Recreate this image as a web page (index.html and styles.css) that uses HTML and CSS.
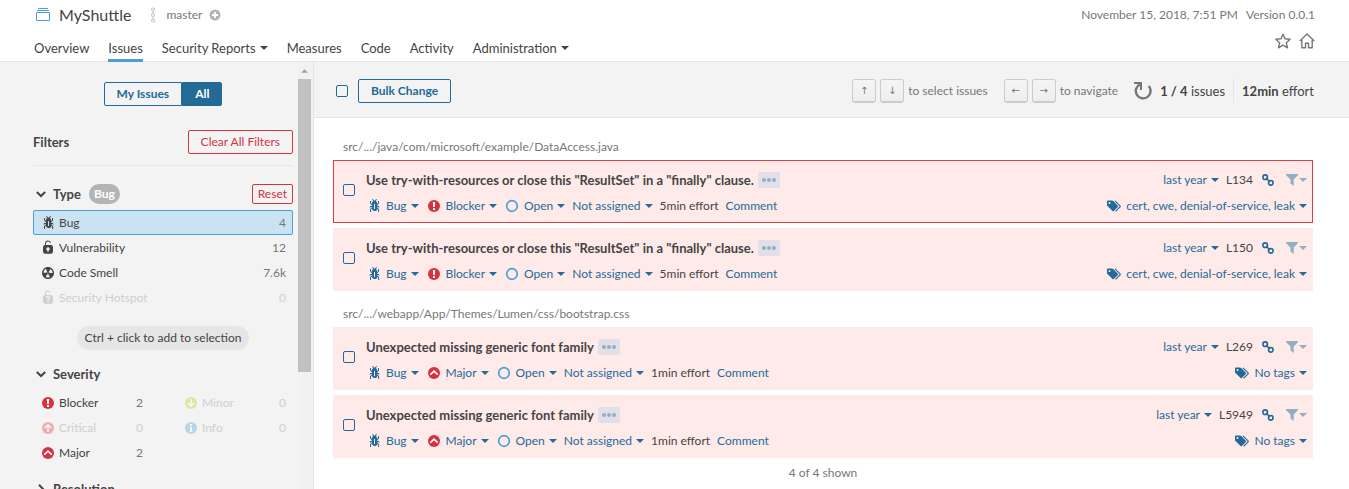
FILE: index.html
```html
<!DOCTYPE html>
<html lang="en">
<head>
<meta charset="utf-8">
<title>MyShuttle - Issues</title>
<link rel="stylesheet" href="styles.css">
</head>
<body>
<svg class="sprite" aria-hidden="true">
  <symbol id="bug" viewBox="0 0 16 16"><path fill="currentColor" d="M11 9h1.3l.5.8.8-.5-.8-1.3H11v-.3l2-2.3V3h-1v2l-1 1.2V5c-.1-.8-.7-1.5-1.4-1.9L11 1.800l-.7-.7-1.800 1.600-1.800-1.600-.7.7 1.500 1.300C6.700 3.500 6.100 4.200 6 5v1.100L5 5V3H4v2.300l2 2.300V8H4.200l-.7 1.200.8.5.4-.7H6v.3l-2 1.900V14h1v-2.400l1-1C6 12 7.100 13 8.400 13h.8c.7 0 1.400-.3 1.800-.9.3-.4.3-.9.2-1.400l.9.9V14h1v-2.800l-2-1.900V9zm-2 2H8V6h1v5z"/></symbol>
  <symbol id="lock" viewBox="0 0 16 16"><path fill="currentColor" d="M10.8 5H6V3.9a2.28 2.28 0 0 1 2-2.5 2.22 2.22 0 0 1 1.8 1.2.48.48 0 0 0 .7.2.48.48 0 0 0 .2-.7A3 3 0 0 0 8 .4a3.34 3.34 0 0 0-3 3.5v1.2a2.16 2.16 0 0 0-2 2.1v4.4a2.22 2.22 0 0 0 2.2 2.2h5.6a2.22 2.22 0 0 0 2.2-2.2V7.2A2.22 2.22 0 0 0 10.8 5zm-2.2 5.5v1.2H7.4v-1.2a1.66 1.66 0 0 1-1.1-1.6A1.75 1.75 0 0 1 8 7.2a1.71 1.71 0 0 1 .6 3.3z"/></symbol>
  <symbol id="hotspot" viewBox="0 0 16 16"><path fill="currentColor" d="M10.8 5H6V3.9a2.28 2.28 0 0 1 2-2.5 2.22 2.22 0 0 1 1.8 1.2.48.48 0 0 0 .7.2.48.48 0 0 0 .2-.7A3 3 0 0 0 8 .4a3.34 3.34 0 0 0-3 3.5v1.2a2.16 2.16 0 0 0-2 2.1v4.4a2.22 2.22 0 0 0 2.2 2.2h5.6a2.22 2.22 0 0 0 2.2-2.2V7.2A2.22 2.22 0 0 0 10.8 5z"/><path fill="none" stroke="#f3f3f3" stroke-width="1.3" d="M6.2 8q.2-1.600 1.800-1.600t1.800 1.400Q9.800 8.800 8 9.700v.8M8 11.300v1.300"/></symbol>
  <symbol id="smell" viewBox="0 0 16 16"><path fill="currentColor" d="M8 2C4.7 2 2 4.7 2 8s2.700 6 6 6 6-2.700 6-6-2.700-6-6-6zm-.5 5.500h.9v.9h-.9v-.9zm-3.800.2c-.1 0-.2-.1-.2-.2 0-.4.1-1.200.6-2S5.300 4.200 5.600 4c.2 0 .3 0 .3.1l1.300 2.300c0 .1 0 .2-.1.2-.1.2-.2.3-.3.5-.1.2-.2.4-.2.5 0 .1-.1.2-.2.2l-2.700-.1zM9.900 12c-.3.2-1.100.5-2 .5-.9 0-1.700-.3-2-.5-.1 0-.1-.2-.1-.3l1.300-2.300c0-.1.1-.1.2-.1.2.1.3.1.5.1s.4 0 .5-.1c.1 0 .2 0 .2.1l1.300 2.300c.2.2.2.3.1.3zm2.500-4.100L9.700 8c-.1 0-.2-.1-.2-.2 0-.2-.1-.4-.2-.5 0-.1-.2-.3-.3-.4-.1 0-.1-.1-.1-.2l1.300-2.300c.1-.1.2-.1.3-.1.3.2 1 .7 1.500 1.500s.6 1.600.6 2c0 0-.1.1-.2.1z"/></symbol>
  <symbol id="blocker" viewBox="0 0 16 16"><circle cx="8" cy="8" r="6" fill="#d4333f"/><path fill="#fff" d="M6.900 4h2.200L8.900 9H7.100zM7 10h2v2H7z"/></symbol>
  <symbol id="critical" viewBox="0 0 16 16"><circle cx="8" cy="8" r="6" fill="#d4333f"/><path fill="none" stroke="#fff" stroke-width="1.600" d="M8 12V5M4.800 8 8 4.800 11.200 8"/></symbol>
  <symbol id="major" viewBox="0 0 16 16"><circle cx="8" cy="8" r="6" fill="#d4333f"/><path fill="none" stroke="#fff" stroke-width="1.700" d="M4.300 9.600 8 6.200l3.700 3.400"/></symbol>
  <symbol id="minor" viewBox="0 0 16 16"><circle cx="8" cy="8" r="6" fill="#b0d513"/><path fill="none" stroke="#fff" stroke-width="1.600" d="M8 4v7M4.800 8 8 11.200 11.200 8"/></symbol>
  <symbol id="info" viewBox="0 0 16 16"><circle cx="8" cy="8" r="6" fill="#4b9fd5"/><path fill="#fff" d="M7 4h2v1.700H7zM6.500 6.700H9V11h.6v1h-3v-1H7V7.700h-.5z"/></symbol>
  <symbol id="open" viewBox="0 0 16 16"><circle cx="8" cy="8" r="5.300" fill="none" stroke="#4b9fd5" stroke-width="1.700"/></symbol>
  <symbol id="caret" viewBox="0 0 8 4"><path fill="currentColor" d="M0 0h8L4 4z"/></symbol>
  <symbol id="chevron" viewBox="0 0 10 10"><path fill="none" stroke="currentColor" stroke-width="2" d="m.8 3 4.200 4 4.200-4"/></symbol>
  <symbol id="link" viewBox="0 0 12 12"><g fill="none" stroke="currentColor" stroke-width="1.600"><circle cx="3.200" cy="3.200" r="2.300"/><circle cx="8.800" cy="8.800" r="2.300"/><path d="m4 4 4 4"/></g></symbol>
  <symbol id="funnel" viewBox="0 0 12 12"><path fill="currentColor" d="M0 0h12v1L7.700 5.500V12L4.500 9.500v-4L0 1z"/></symbol>
  <symbol id="tags" viewBox="0 0 14 12"><path fill="currentColor" fill-rule="evenodd" d="M0 1.200Q0 .5.800.5h4.100q.8 0 1.400.6l4.500 4.600q.6.700 0 1.300l-3.900 4q-.6.500-1.300 0L.7 6.300Q0 5.700 0 4.900zM2.500 2a1 1 0 1 0 0 2 1 1 0 0 0 0-2z"/><path fill="none" stroke="currentColor" stroke-width="1.200" d="m8 .8 5 5q.5.600 0 1.100L8.600 11.300"/></symbol>
</svg>

<header class="header">
  <div class="header-top">
    <div class="project">
      <svg class="project-icon" viewBox="0 0 16 16" fill="none" stroke="#4b9fd5"><path d="M1.500 5.500h13v8h-13zM2 3.500h12M3 1.500h10"/></svg>
      <span class="project-name">MyShuttle</span>
      <svg class="branch-icon" viewBox="0 0 6 16" fill="none" stroke="#c9c9c9" stroke-width="1.200"><circle cx="3" cy="2.500" r="1.500"/><circle cx="3" cy="8" r="1.500"/><circle cx="3" cy="13.500" r="1.500"/><path d="M3 4v2.500M3 9.500V12"/></svg>
      <span class="branch">master</span>
      <svg class="plus-icon" viewBox="0 0 12 12"><circle cx="6" cy="6" r="5.500" fill="#b4b4b4"/><path d="M6 3v6M3 6h6" stroke="#fff" stroke-width="1.800"/></svg>
    </div>
    <div class="version"><span>November 15, 2018, 7:51 PM</span><span>Version 0.0.1</span></div>
  </div>
  <div class="header-nav">
    <nav class="nav">
      <a href="#">Overview</a>
      <a href="#" class="active">Issues</a>
      <a href="#">Security Reports<svg class="caret"><use href="#caret"/></svg></a>
      <a href="#">Measures</a>
      <a href="#">Code</a>
      <a href="#">Activity</a>
      <a href="#">Administration<svg class="caret"><use href="#caret"/></svg></a>
    </nav>
    <div class="header-actions">
      <button aria-label="Favorite"><svg viewBox="0 0 16 16"><path fill="none" stroke="#777" stroke-width="1.400" stroke-linejoin="round" d="m8 1.200 2 4.600 5.200.5-3.900 3.400 1.200 5.100L8 12.200l-4.500 2.600 1.200-5.100L.8 6.300 6 5.800z"/></svg></button>
      <a href="#" aria-label="Home"><svg viewBox="0 0 16 16"><path fill="none" stroke="#777" stroke-width="1.400" stroke-linejoin="round" d="M.8 8 8 1l7.200 7M2.800 7v7.800h3.700v-4.500h3v4.500h3.700V7"/></svg></a>
    </div>
  </div>
</header>

<div class="layout">
  <aside class="sidebar">
    <div class="sidebar-content">
      <div class="toggle"><button>My Issues</button><button class="selected">All</button></div>
      <div class="filters-head"><h2>Filters</h2><button class="btn-red">Clear All Filters</button></div>

      <section class="facet">
        <div class="facet-head"><svg class="chevron"><use href="#chevron"/></svg><h3>Type</h3><span class="badge">Bug</span><button class="btn-red btn-small">Reset</button></div>
        <div class="facet-list">
          <button class="facet-item chosen"><svg><use href="#bug"/></svg><span>Bug</span><span class="count">4</span></button>
          <button class="facet-item"><svg><use href="#lock"/></svg><span>Vulnerability</span><span class="count">12</span></button>
          <button class="facet-item"><svg><use href="#smell"/></svg><span>Code Smell</span><span class="count">7.6k</span></button>
          <button class="facet-item disabled" disabled><svg><use href="#hotspot"/></svg><span>Security Hotspot</span><span class="count">0</span></button>
        </div>
        <div class="hint">Ctrl + click to add to selection</div>
      </section>

      <section class="facet">
        <div class="facet-head"><svg class="chevron"><use href="#chevron"/></svg><h3>Severity</h3></div>
        <div class="facet-list two-columns">
          <button class="facet-item"><svg><use href="#blocker"/></svg><span>Blocker</span><span class="count">2</span></button>
          <button class="facet-item disabled" disabled><svg><use href="#minor"/></svg><span>Minor</span><span class="count">0</span></button>
          <button class="facet-item disabled" disabled><svg><use href="#critical"/></svg><span>Critical</span><span class="count">0</span></button>
          <button class="facet-item disabled" disabled><svg><use href="#info"/></svg><span>Info</span><span class="count">0</span></button>
          <button class="facet-item"><svg><use href="#major"/></svg><span>Major</span><span class="count">2</span></button>
        </div>
      </section>

      <section class="facet">
        <div class="facet-head"><svg class="chevron closed"><use href="#chevron"/></svg><h3>Resolution</h3></div>
      </section>
    </div>
    <div class="scrollbar"><svg class="scroll-up"><use href="#caret"/></svg><div class="thumb"></div></div>
  </aside>

  <main class="main">
    <div class="toolbar">
      <input type="checkbox" aria-label="Select all issues">
      <button class="btn-blue">Bulk Change</button>
      <div class="shortcuts">
        <span class="keys"><kbd>↑</kbd><kbd>↓</kbd>to select issues</span>
        <span class="keys"><kbd>←</kbd><kbd>→</kbd>to navigate</span>
      </div>
      <button class="reload" aria-label="Reload"><svg viewBox="0 0 18 18" fill="none" stroke="#777"><path stroke-width="2.400" d="M6 2.300A7.400 7.400 0 1 0 14.700 4"/><path stroke-width="2" d="M0 1h7v7"/></svg></button>
      <span class="counter"><b>1 / 4</b> issues</span>
      <span class="effort"><b>12min</b> effort</span>
    </div>

    <div class="issues">
      <div class="path">src/.../java/com/microsoft/example/DataAccess.java</div>
      <article class="issue current">
        <input type="checkbox" aria-label="Select issue">
        <div class="issue-body">
          <div class="row">
            <h4>Use try-with-resources or close this "ResultSet" in a "finally" clause.</h4><button class="more" aria-label="Show rule"><i></i><i></i><i></i></button>
            <div class="row-end"><button>last year<svg class="caret"><use href="#caret"/></svg></button><span class="line">L134</span><a href="#" aria-label="Permalink"><svg class="link"><use href="#link"/></svg></a><button class="similar" aria-label="Filter similar issues"><svg class="funnel"><use href="#funnel"/></svg><svg class="caret"><use href="#caret"/></svg></button></div>
          </div>
          <div class="row meta">
            <button><svg class="icon"><use href="#bug"/></svg>Bug<svg class="caret"><use href="#caret"/></svg></button>
            <button><svg class="icon"><use href="#blocker"/></svg>Blocker<svg class="caret"><use href="#caret"/></svg></button>
            <button><svg class="icon"><use href="#open"/></svg>Open<svg class="caret"><use href="#caret"/></svg></button>
            <button>Not assigned<svg class="caret"><use href="#caret"/></svg></button>
            <span>5min effort</span>
            <button>Comment</button>
            <div class="row-end"><button><svg class="tags"><use href="#tags"/></svg>cert, cwe, denial-of-service, leak<svg class="caret"><use href="#caret"/></svg></button></div>
          </div>
        </div>
      </article>
      <article class="issue">
        <input type="checkbox" aria-label="Select issue">
        <div class="issue-body">
          <div class="row">
            <h4>Use try-with-resources or close this "ResultSet" in a "finally" clause.</h4><button class="more" aria-label="Show rule"><i></i><i></i><i></i></button>
            <div class="row-end"><button>last year<svg class="caret"><use href="#caret"/></svg></button><span class="line">L150</span><a href="#" aria-label="Permalink"><svg class="link"><use href="#link"/></svg></a><button class="similar" aria-label="Filter similar issues"><svg class="funnel"><use href="#funnel"/></svg><svg class="caret"><use href="#caret"/></svg></button></div>
          </div>
          <div class="row meta">
            <button><svg class="icon"><use href="#bug"/></svg>Bug<svg class="caret"><use href="#caret"/></svg></button>
            <button><svg class="icon"><use href="#blocker"/></svg>Blocker<svg class="caret"><use href="#caret"/></svg></button>
            <button><svg class="icon"><use href="#open"/></svg>Open<svg class="caret"><use href="#caret"/></svg></button>
            <button>Not assigned<svg class="caret"><use href="#caret"/></svg></button>
            <span>5min effort</span>
            <button>Comment</button>
            <div class="row-end"><button><svg class="tags"><use href="#tags"/></svg>cert, cwe, denial-of-service, leak<svg class="caret"><use href="#caret"/></svg></button></div>
          </div>
        </div>
      </article>

      <div class="path">src/.../webapp/App/Themes/Lumen/css/bootstrap.css</div>
      <article class="issue">
        <input type="checkbox" aria-label="Select issue">
        <div class="issue-body">
          <div class="row">
            <h4>Unexpected missing generic font family</h4><button class="more" aria-label="Show rule"><i></i><i></i><i></i></button>
            <div class="row-end"><button>last year<svg class="caret"><use href="#caret"/></svg></button><span class="line">L269</span><a href="#" aria-label="Permalink"><svg class="link"><use href="#link"/></svg></a><button class="similar" aria-label="Filter similar issues"><svg class="funnel"><use href="#funnel"/></svg><svg class="caret"><use href="#caret"/></svg></button></div>
          </div>
          <div class="row meta">
            <button><svg class="icon"><use href="#bug"/></svg>Bug<svg class="caret"><use href="#caret"/></svg></button>
            <button><svg class="icon"><use href="#major"/></svg>Major<svg class="caret"><use href="#caret"/></svg></button>
            <button><svg class="icon"><use href="#open"/></svg>Open<svg class="caret"><use href="#caret"/></svg></button>
            <button>Not assigned<svg class="caret"><use href="#caret"/></svg></button>
            <span>1min effort</span>
            <button>Comment</button>
            <div class="row-end"><button><svg class="tags"><use href="#tags"/></svg>No tags<svg class="caret"><use href="#caret"/></svg></button></div>
          </div>
        </div>
      </article>
      <article class="issue">
        <input type="checkbox" aria-label="Select issue">
        <div class="issue-body">
          <div class="row">
            <h4>Unexpected missing generic font family</h4><button class="more" aria-label="Show rule"><i></i><i></i><i></i></button>
            <div class="row-end"><button>last year<svg class="caret"><use href="#caret"/></svg></button><span class="line">L5949</span><a href="#" aria-label="Permalink"><svg class="link"><use href="#link"/></svg></a><button class="similar" aria-label="Filter similar issues"><svg class="funnel"><use href="#funnel"/></svg><svg class="caret"><use href="#caret"/></svg></button></div>
          </div>
          <div class="row meta">
            <button><svg class="icon"><use href="#bug"/></svg>Bug<svg class="caret"><use href="#caret"/></svg></button>
            <button><svg class="icon"><use href="#major"/></svg>Major<svg class="caret"><use href="#caret"/></svg></button>
            <button><svg class="icon"><use href="#open"/></svg>Open<svg class="caret"><use href="#caret"/></svg></button>
            <button>Not assigned<svg class="caret"><use href="#caret"/></svg></button>
            <span>1min effort</span>
            <button>Comment</button>
            <div class="row-end"><button><svg class="tags"><use href="#tags"/></svg>No tags<svg class="caret"><use href="#caret"/></svg></button></div>
          </div>
        </div>
      </article>
      <div class="shown">4 of 4 shown</div>
    </div>
  </main>
</div>
</body>
</html>
```

FILE: styles.css
```css
* { box-sizing: border-box; }
body {
  margin: 0;
  height: 100vh;
  overflow: hidden;
  display: flex;
  flex-direction: column;
  font: 12px/16px Lato, "Open Sans", sans-serif;
  color: #444;
  background: #fff;
}
button {
  display: inline-flex;
  align-items: center;
  padding: 0;
  border: 0;
  background: none;
  font: inherit;
  color: inherit;
  white-space: nowrap;
}
a { color: inherit; text-decoration: none; }
h2, h3, h4 { margin: 0; font-size: 13px; font-weight: 700; }
b { font-weight: 700; }
svg { flex: none; }
.sprite { display: none; }
.caret { width: 8px; height: 4px; margin-left: 4px; }
input[type="checkbox"] {
  appearance: none;
  flex: none;
  width: 12px;
  height: 12px;
  margin: 0;
  border: 1px solid #236a97;
  border-radius: 2px;
}

.header {
  flex: none;
  padding: 0 34px;
  border-bottom: 1px solid #e6e6e6;
}
.header-top, .header-nav, .project, .nav, .header-actions, .version {
  display: flex;
  align-items: center;
}
.header-top, .header-nav { justify-content: space-between; }
.header-top { height: 30px; }
.header-nav { height: 31px; }
.project-icon { width: 16px; height: 16px; margin: 0 8px 0 1px; }
.project-name { font-size: 16px; }
.branch-icon { width: 6px; height: 16px; margin: 0 10px 0 19px; }
.branch { color: #777; }
.plus-icon { width: 12px; height: 12px; margin-left: 7px; }
.version { gap: 8px; color: #777; }
.nav { gap: 19px; font-size: 13px; align-self: stretch; }
.nav a {
  display: flex;
  align-items: center;
  height: 32px;
  padding-top: 7px;
  border-bottom: 3px solid transparent;
}
.nav .active { border-color: #4b9fd5; }
.header-actions { gap: 8px; align-self: flex-start; padding-top: 3px; }
.header-actions svg { display: block; width: 16px; height: 16px; }

.layout { flex: 1; min-height: 0; display: flex; }
.sidebar {
  flex: none;
  display: flex;
  width: 314px;
  overflow: hidden;
  background: #f3f3f3;
  border-right: 1px solid #e6e6e6;
}
.sidebar-content { flex: 1; padding: 20px 5px 0 33px; }
.scrollbar { width: 15px; padding: 7px 2px 0 0; background: #f1f1f1; }
.scroll-up { display: block; width: 7px; height: 4px; margin: 0 auto 6px; color: #a3a3a3; transform: rotate(180deg); }
.thumb { height: 293px; background: #c1c1c1; }

.toggle { display: flex; justify-content: center; margin-bottom: 24px; }
.toggle button, .btn-blue {
  height: 24px;
  padding: 0 12px;
  border: 1px solid #236a97;
  border-radius: 2px;
  font-weight: 700;
  color: #236a97;
}
.toggle button:first-child { border-radius: 2px 0 0 2px; }
.toggle .selected { border-radius: 0 2px 2px 0; background: #236a97; color: #fff; }
.filters-head {
  display: flex;
  align-items: center;
  justify-content: space-between;
  padding-bottom: 11px;
  border-bottom: 1px solid #e6e6e6;
  margin-bottom: 18px;
}
.btn-red {
  height: 24px;
  padding: 0 12px;
  border: 1px solid #d4333f;
  border-radius: 2px;
  color: #d4333f;
}
.btn-small { height: 20px; padding: 0 5px; margin-left: auto; }

.facet { margin-bottom: 14px; }
.facet-head { display: flex; align-items: center; height: 20px; padding-left: 3px; margin-bottom: 6px; }
.chevron { width: 10px; height: 10px; margin-right: 7px; }
.chevron.closed { transform: rotate(-90deg); }
.badge {
  height: 20px;
  margin-left: 8px;
  padding: 2px 5px;
  border-radius: 10px;
  background: #b4b4b4;
  color: #fff;
  font-weight: 700;
}
.facet-list { display: grid; }
.two-columns { grid-template-columns: 1fr 1fr; column-gap: 26px; }
.facet-item {
  height: 25px;
  padding: 0 6px;
  border: 1px solid transparent;
  border-radius: 2px;
}
.facet-item svg { width: 16px; height: 16px; margin-right: 3px; }
.facet-item .count { margin-left: auto; color: #777; }
.facet-item.chosen { background: #cae3f2; border-color: #4b9fd5; }
.facet-item.disabled, .facet-item.disabled .count { color: #cfcfcf; }
.two-columns .disabled svg { opacity: .35; }
.hint {
  width: max-content;
  margin: 16px auto 0;
  padding: 4px 8px;
  border-radius: 12px;
  background: #e6e6e6;
}

.main { flex: 1; min-width: 0; }
.toolbar {
  display: flex;
  align-items: center;
  height: 56px;
  padding: 2px 35px 0 22px;
  border-bottom: 1px solid #e6e6e6;
  background: #f3f3f3;
}
.btn-blue { margin-left: 10px; }
.shortcuts { display: flex; gap: 16px; margin-left: auto; color: #777; }
.keys { display: flex; align-items: center; }
kbd {
  width: 24px;
  height: 24px;
  margin-right: 4px;
  border: 1px solid #ccc;
  border-bottom-width: 2px;
  border-radius: 3px;
  background: linear-gradient(#f5f5f5, #eee);
  font: 10px/21px "DejaVu Sans", sans-serif;
  text-align: center;
}
.reload { margin: 0 8px 0 16px; }
.reload svg { width: 18px; height: 18px; }
.counter, .effort { font-size: 13px; }
.effort { margin-left: 8px; padding: 4px 0 4px 8px; border-left: 1px solid #e6e6e6; }

.issues { padding: 21px 36px 0 19px; }
.path { padding: 0 10px; margin-bottom: 5px; color: #777; }
.issue {
  display: flex;
  align-items: center;
  height: 63px;
  margin-bottom: 5px;
  padding: 0 5px 0 9px;
  border: 1px solid #ffeaea;
  background: #ffeaea;
}
.issue.current { border-color: #dd4040; }
.issue > input { margin-bottom: 3px; }
.issue + .path { padding-top: 10px; }
.issue-body { flex: 1; min-width: 0; margin-left: 11px; padding-top: 2px; }
.row { display: flex; align-items: center; height: 26px; white-space: nowrap; }
.row button { color: #236a97; }
.row-end { display: flex; align-items: center; margin-left: auto; }
.row .more { justify-content: center; gap: 1px; width: 22px; height: 16px; margin-left: 4px; border-radius: 2px; background: #e3dfe8; }
.more i { width: 4px; height: 4px; border-radius: 2px; background: #91b0c6; }
.line { margin: 0 9px 0 7px; }
.link { display: block; width: 12px; height: 12px; color: #236a97; }
.row .similar { margin-left: 12px; color: #91aec4; }
.funnel { width: 12px; height: 12px; }
.similar .caret { margin-left: 1px; }
.meta { gap: 7px; }
.icon { width: 16px; height: 16px; margin-right: 4px; }
.tags { width: 14px; height: 12px; margin-right: 5px; }
.shown { margin-top: 7px; text-align: center; color: #777; }
```
